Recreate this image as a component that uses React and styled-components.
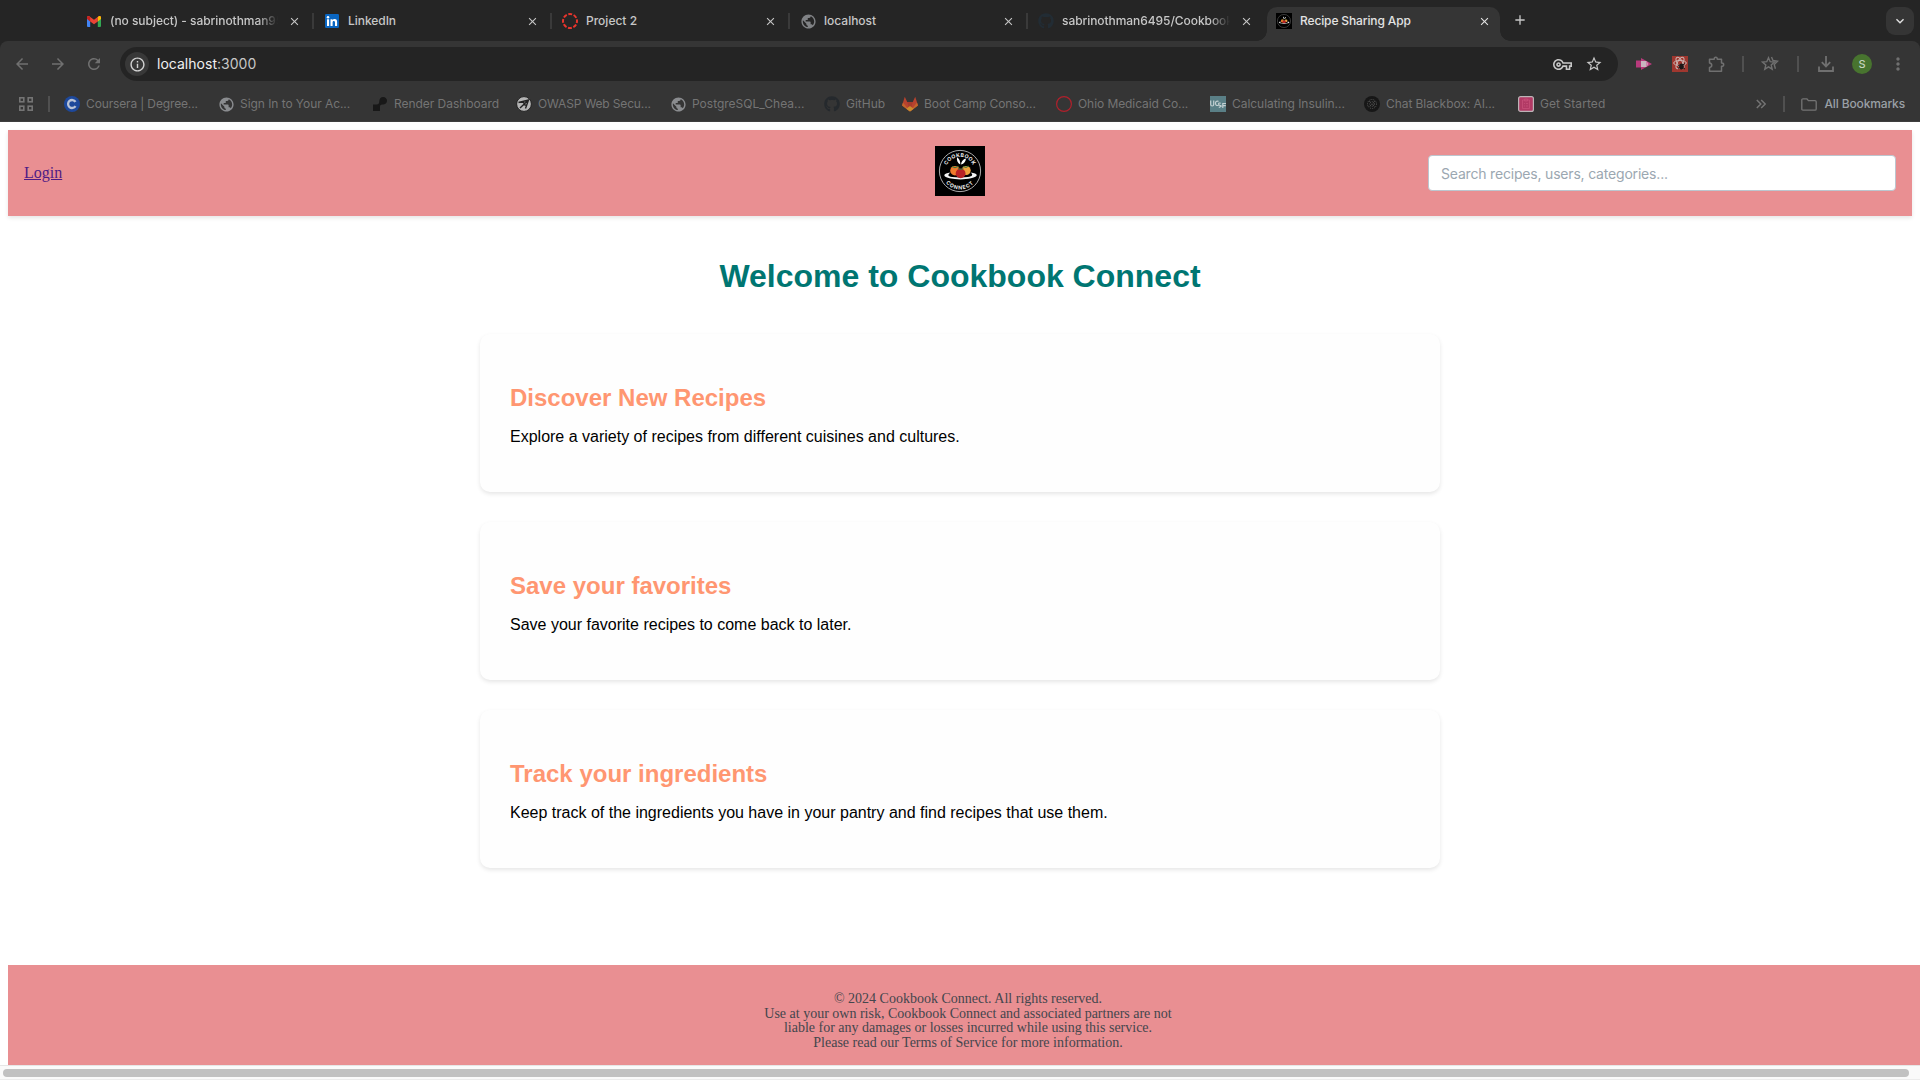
import React from "react";
import styled, { createGlobalStyle } from "styled-components";
import {
  MdArrowBack, MdArrowForward, MdRefresh, MdInfoOutline, MdStarOutline, MdClose, MdAdd,
  MdKeyboardArrowDown, MdMoreVert, MdPublic, MdOutlineVpnKey,
} from "react-icons/md";
import { FaGithub } from "react-icons/fa";

const GlobalStyle = createGlobalStyle`
  * { box-sizing: border-box; }
  body { margin: 0; background: #fff; overflow: hidden; }
  svg { display: block; flex: none; }
`;

const ui = `Inter, "Liberation Sans", sans-serif`;

const Window = styled.div`
  width: 1920px;
  height: 1080px;
  display: flex;
  flex-direction: column;
  overflow: hidden;
  background: #fff;
`;

/* ---------- tab strip ---------- */
const TabStrip = styled.div`
  height: 41px;
  flex: none;
  display: flex;
  align-items: flex-start;
  padding: 7px 6px 0 75px;
  background: #252525;
  font: 500 12px/28px ${ui};
  color: #c7c7c7;
`;
const Tab = styled.div`
  width: 238px;
  height: 28px;
  display: flex;
  align-items: center;
  padding: 0 0 0 11px;
`;
const ActiveTab = styled.div`
  width: 253px;
  height: 34px;
  margin-left: -8px;
  display: flex;
  align-items: flex-end;
`;
const ActiveBody = styled.div`
  width: 233px;
  height: 34px;
  display: flex;
  align-items: center;
  padding: 0 0 6px 9px;
  background: #353535;
  border-radius: 10px 10px 0 0;
  color: #e3e3e3;
`;
const Flare = styled.div`
  width: 10px;
  height: 10px;
  background: radial-gradient(circle at ${(p) => (p.$right ? "100% 0" : "0 0")}, #252525 9.5px, #353535 10px);
`;
const Favicon = styled.div`
  width: 16px;
  height: 16px;
  flex: none;
  display: flex;
  align-items: center;
  justify-content: center;
`;
const TabTitle = styled.div`
  width: 176px;
  flex: none;
  margin-left: 8px;
  white-space: nowrap;
  letter-spacing: ${(p) => p.$spacing || 0}px;
  ${(p) => p.$fade && "mask-image: linear-gradient(90deg, #000 148px, transparent 168px);"}
`;
const TabClose = styled.div`
  width: 16px;
  height: 16px;
  flex: none;
  display: flex;
  align-items: center;
  justify-content: center;
`;
const TabDivider = styled.div`
  width: 2px;
  height: 16px;
  flex: none;
  margin-left: auto;
  margin-right: -1px;
  background: #3a3a3a;
`;
const NewTab = styled.div`
  width: 20px;
  height: 28px;
  display: flex;
  align-items: center;
  justify-content: center;
  padding-bottom: 2px;
`;
const TabSearch = styled.div`
  width: 28px;
  height: 28px;
  margin-left: auto;
  border-radius: 9px;
  display: flex;
  align-items: center;
  justify-content: center;
  background: #353535;
  color: #e3e3e3;
`;

/* ---------- toolbar ---------- */
const ToolbarArea = styled.div`
  height: 81px;
  flex: none;
  background: linear-gradient(#353535, #353535) padding-box;
  border-radius: 8px 8px 0 0;
  border-bottom: 1px solid #3f3f3f;
`;
const ChromeBack = styled.div`
  flex: none;
  background: linear-gradient(#252525 20px, #353535 20px);
`;
const Toolbar = styled.div`
  display: flex;
  align-items: center;
  height: 40px;
  padding: 6px 4px 0;
`;
const Slot = styled.div`
  width: ${(p) => p.$w || 36}px;
  height: 34px;
  flex: none;
  display: flex;
  align-items: center;
  justify-content: center;
  color: ${(p) => p.$c || "#707070"};
`;
const Omnibox = styled.div`
  width: 1498px;
  height: 34px;
  margin: 0 8px;
  padding: 0 12px 0 5px;
  border-radius: 17px;
  background: #242424;
  display: flex;
  align-items: center;
  color: #d2d2d2;
`;
const SiteInfo = styled.div`
  width: 24px;
  height: 24px;
  border-radius: 50%;
  background: #383838;
  display: flex;
  align-items: center;
  justify-content: center;
`;
const Url = styled.div`
  margin-left: 8px;
  flex: 1;
  font: 400 14px/20px ${ui};
  letter-spacing: 0.02px;
  color: #c7c7c7;
  b { font-weight: 400; color: #f0f0f0; }
`;
const Bar = styled.div`
  width: 2px;
  height: 16px;
  flex: none;
  background: #505050;
`;
const Avatar = styled.div`
  width: 20px;
  height: 20px;
  border-radius: 50%;
  background: #48742f;
  color: #c5d2bd;
  text-align: center;
  font: 500 11px/20px ${ui};
`;

/* ---------- bookmarks ---------- */
const Bookmarks = styled.div`
  display: flex;
  align-items: center;
  height: 40px;
  padding: 6px 15px 0 18px;
  font: 400 12px/16px ${ui};
  color: #747474;
`;
const Bookmark = styled.div`
  width: ${(p) => p.$w}px;
  flex: none;
  display: flex;
  align-items: center;
  gap: 6px;
  white-space: nowrap;
  letter-spacing: ${(p) => p.$spacing || 0}px;
`;
const BookmarksEnd = styled.div`
  margin-left: auto;
  display: flex;
  align-items: center;
  color: #9aa0a6;
  font-weight: 500;
  letter-spacing: -0.14px;
  white-space: nowrap;
`;
const Gap = styled.div`
  width: ${(p) => p.$w}px;
  flex: none;
`;

/* ---------- page ---------- */
const Viewport = styled.div`
  flex: 1;
  overflow: hidden;
  display: flex;
  flex-direction: column;
  padding: 8px 0 0 8px;
`;
const Header = styled.header`
  width: 1904px;
  height: 86px;
  flex: none;
  display: grid;
  grid-template-columns: 1fr 50px 1fr;
  align-items: center;
  padding: 0 16px;
  background: #e98f92;
  box-shadow: 0 2px 4px rgba(0, 0, 0, 0.1);
`;
const LoginLink = styled.a`
  font: 16px/18px "Liberation Serif", "Times New Roman", serif;
  color: #4f1b85;
  text-decoration: underline;
`;
const LogoBox = styled.div`
  width: 50px;
  height: 50px;
  margin-bottom: 4px;
`;
const SearchBox = styled.input`
  justify-self: end;
  width: 468px;
  height: 36px;
  padding: 0 12px;
  border: 1px solid #bcc6cf;
  border-radius: 4px;
  background: #fff;
  font: 400 14px/20px ${ui};
  letter-spacing: -0.19px;
  &::placeholder { color: #9ba7b1; opacity: 1; }
`;
const Main = styled.main`
  width: 960px;
  margin-left: 472px;
  flex: none;
  font-family: "Liberation Sans", Helvetica, Arial, sans-serif;
`;
const Title = styled.h1`
  margin: 42px 0 39px;
  text-align: center;
  font-size: 32px;
  line-height: 37px;
  color: #007672;
`;
const Card = styled.section`
  height: 158px;
  margin-bottom: 30px;
  padding: 50px 30px 0;
  border-radius: 10px;
  background: #fefefe;
  box-shadow: 0 2px 4px rgba(0, 0, 0, 0.1);
`;
const CardTitle = styled.h2`
  margin: 0 0 16px;
  font-size: 24px;
  line-height: 28px;
  color: #ff9671;
`;
const CardText = styled.p`
  margin: 0;
  font-size: 16px;
  line-height: 18px;
  color: #000;
`;
const Footer = styled.footer`
  width: 1920px;
  height: 100px;
  flex: none;
  margin-top: auto;
  padding-top: 27px;
  background: #e98f92;
  color: #44464d;
  text-align: center;
  font: 14px/14.5px "Liberation Serif", "Times New Roman", serif;
`;
const ScrollTrack = styled.div`
  height: 15px;
  flex: none;
  padding: 3px 11px 2px 3px;
  border-top: 1px solid #e6e6e6;
  border-bottom: 1px solid #ececec;
  background: #fafafa;
`;
const ScrollThumb = styled.div`
  height: 8px;
  border-radius: 4px;
  background: #c1c1c1;
`;

/* ---------- drawings ---------- */
const Logo = ({ size = 50, plain }) => (
  <svg width={size} height={size} viewBox="0 0 50 50">
    <rect width="50" height="50" fill="#000" />
    <circle cx="25" cy="25" r="20.6" fill="none" stroke="#d8d8d8" strokeWidth="0.8" />
    {!plain && (
      <>
        <defs>
          <path id="arcTop" d="M10.8 25 A14.2 14.2 0 0 1 39.2 25" />
          <path id="arcBottom" d="M6.500 25 A18.500 18.500 0 0 0 43.500 25" />
        </defs>
        <g fill="#eee" fontFamily="Inter, sans-serif" fontWeight="700" fontSize="5.2" textAnchor="middle">
          <text letterSpacing="0.25"><textPath href="#arcTop" startOffset="50%">COOKBOOK</textPath></text>
          <text letterSpacing="0.85"><textPath href="#arcBottom" startOffset="50%">CONNECT</textPath></text>
        </g>
      </>
    )}
    <path d="M15.500 26.500C8 27.500 7 30.500 14.500 32.300c7 1.500 15 1.500 21.500 0 8-1.800 7.500-4.800-.5-5.800 3 2.200 2 3.900-2.500 4.500-5 .6-11 .6-16 0-4.500-.6-4.500-2.300-1.500-4.500z" fill="#f4f4f4" />
    <path d="M25.300 18.500C22.500 17 21.500 14.500 22 11.300c2.300 1.500 3.500 4 3.300 7.200zM26 18.500c.2-3 2-5.200 5-6-.2 3-1.800 5.300-5 6z" fill="#fff" />
    <circle cx="20" cy="24.700" r="4.800" fill="#ef7a2d" />
    <circle cx="31.200" cy="24.500" r="4.500" fill="#f0a03c" />
    <circle cx="25.600" cy="27.400" r="4.900" fill="#b82226" />
    <path d="M17 20.500l3 1.200 3.500-1.500M28 20.500l3 1 2.500-1.500M23 22.500l2.600 1 2.700-1" stroke="#3f7a3c" strokeWidth="1.100" fill="none" />
  </svg>
);

const Gmail = () => (
  <svg width="14" height="11" viewBox="0 0 14 11">
    <path d="M0 2v8a1 1 0 0 0 1 1h2.200V4.500z" fill="#4285f4" />
    <path d="M14 2v8a1 1 0 0 1-1 1h-2.200V4.500z" fill="#34a853" />
    <path d="M0 1.500C0 0 1.600-.4 2.600.4L7 3.700 11.400.4C12.400-.4 14 0 14 1.500L10.800 2.600v2.900L7 8.300 3.200 5.500z" fill="#ea4335" />
    <path d="M10.800 1.100l.8-.7C12.600-.4 14 .2 14 1.500V3l-3.200 2.500z" fill="#fbbc04" />
    <path d="M0 1.500V3l3.200 2.500V.9C2 -.3 0 0 0 1.500z" fill="#c5221f" />
  </svg>
);

const LinkedIn = () => (
  <svg width="14" height="14" viewBox="0 0 14 14">
    <rect width="14" height="14" rx="1.200" fill="#0a66c2" />
    <path d="M2 5.300h2.100V12H2zM5.500 5.300h2v.9c.4-.7 1.100-1.100 2.100-1.100 1.900 0 2.500 1.200 2.500 3V12H10V8.600c0-.9-.2-1.700-1.100-1.700-1 0-1.300.7-1.300 1.700V12H5.500z" fill="#fff" />
    <circle cx="3" cy="3.200" r="1.250" fill="#fff" />
  </svg>
);

const Canvas = () => (
  <svg width="16" height="16" viewBox="0 0 16 16">
    <circle cx="8" cy="8" r="7" fill="none" stroke="#e8352d" strokeWidth="2" strokeDasharray="3.900 1.600" strokeDashoffset="1.950" />
  </svg>
);

const AppsGrid = () => (
  <svg width="14" height="14" viewBox="0 0 14 14" fill="none" stroke="#747474" strokeWidth="1.600">
    <rect x=".8" y=".8" width="4" height="4" /><rect x="9.200" y=".8" width="4" height="4" />
    <rect x=".8" y="9.200" width="4" height="4" /><rect x="9.200" y="9.200" width="4" height="4" />
  </svg>
);

const Coursera = () => (
  <svg width="16" height="16" viewBox="0 0 16 16">
    <circle cx="8" cy="8" r="8" fill="#1d489b" />
    <path d="M11.500 5.900A4 4 0 1 0 11.500 10.100" fill="none" stroke="#b9c3d6" strokeWidth="2.300" />
  </svg>
);

const Render = () => (
  <svg width="16" height="16" viewBox="0 0 16 16" fill="#181818">
    <path d="M11 1a3.800 3.800 0 1 1-.6 7.500C8.300 8.500 8 9.500 8 11v4H1V8.500h3.500C7 8.500 7.200 7 7.300 5 7.500 2.600 9 1 11 1z" />
  </svg>
);

const Owasp = () => (
  <svg width="16" height="16" viewBox="0 0 16 16">
    <circle cx="8" cy="8" r="7.400" fill="#b5b5b5" stroke="#222" strokeWidth="1" />
    <path d="M2.500 6.500L12.500 4 9.500 12.500M12.500 4L4 12M7.500 5.500l.8 3.200 2.700.8" fill="none" stroke="#222" strokeWidth="1.400" />
  </svg>
);

const Gitlab = () => (
  <svg width="16" height="16" viewBox="0 0 16 16">
    <path d="M2.800.8L0 9.500 8 15.500 16 9.500 13.200.8 10.800 6H5.200z" fill="#b8432f" />
    <path d="M5.200 6h5.600L8 15.500z" fill="#a83b2c" />
    <path d="M0 9.500L1 6.500 8 15.500zM16 9.500l-1-3L8 15.500z" fill="#c2662b" />
    <path d="M4.300 12.700L8 10l3.700 2.700L8 15.500z" fill="#c98a2d" />
  </svg>
);

const OhioRing = () => (
  <svg width="16" height="16" viewBox="0 0 16 16">
    <circle cx="8" cy="8" r="7.400" fill="none" stroke="#b0202c" strokeWidth="1.200" />
  </svg>
);

const Ucsf = () => (
  <svg width="16" height="16" viewBox="0 0 16 16">
    <rect width="16" height="16" fill="#5a7f86" />
    <path d="M.7 4.500v4q0 1.500 1.500 1.500T3.700 8.500v-4M8.500 5.300Q5.400 4.500 5.500 7.300T8.500 9.300M10.800 7.200Q8.500 6.500 8.600 8t2 1.700-1.800 1.800M12.800 12V7.500H16M12.800 9.700h3" fill="none" stroke="#c3d0d2" strokeWidth="1.200" />
  </svg>
);

const Blackbox = () => (
  <svg width="16" height="16" viewBox="0 0 16 16">
    <circle cx="8" cy="8" r="8" fill="#171717" />
    <g fill="none" stroke="#575757" strokeWidth="1" strokeDasharray="1 1">
      <circle cx="8" cy="8" r="4.500" /><circle cx="8" cy="8" r="2.300" /><path d="M5 5l6 6M11 5l-6 6" />
    </g>
  </svg>
);

const GetStarted = () => (
  <svg width="16" height="16" viewBox="0 0 16 16">
    <rect x=".6" y=".6" width="14.800" height="14.800" rx="2" fill="#b23a65" stroke="#bdb3b7" strokeWidth="1.200" />
    <path d="M4.500 4h7v8.500h-7zM6.500 3h3v2h-3zM6 7.500h1M8 7.500h2M6 10h1M8 10h2" fill="none" stroke="#c64f79" strokeWidth=".8" />
  </svg>
);

const PinkArrow = () => (
  <svg width="16" height="14" viewBox="0 0 16 14">
    <path d="M5 1l11 6-11 6v-2.500H0v-7h5z" fill="#b83a7c" />
    <path d="M5 4h5.500v6H5z" fill="#c9b6c0" />
    <path d="M10.500 4l2 3-2 3z" fill="#d98bb3" />
  </svg>
);

const ReactTool = () => (
  <svg width="16" height="16" viewBox="0 0 16 16">
    <rect width="16" height="16" fill="#9f372f" />
    <g fill="none" stroke="#ccb5b2" strokeWidth="1">
      <ellipse cx="8" cy="7" rx="6.300" ry="2.600" />
      <ellipse cx="8" cy="7" rx="6.300" ry="2.600" transform="rotate(60 8 7)" />
      <ellipse cx="8" cy="7" rx="6.300" ry="2.600" transform="rotate(120 8 7)" />
    </g>
    <ellipse cx="9.500" cy="10.500" rx="2.300" ry="3" fill="#1d1717" />
    <path d="M6 9l7 4M6 12.500l7-5" stroke="#1d1717" strokeWidth="1" />
  </svg>
);

const Puzzle = () => (
  <svg width="17" height="17" viewBox="0 0 17 17" fill="none" stroke="#707070" strokeWidth="1.500">
    <path d="M1.500 3.200H6.200C6.200.6 9.300.6 9.300 3.200H13.500V7C16.400 7 16.400 10.300 13.500 10.300V15.200H1.500V11.500C4.500 11 4.500 7.500 1.500 7z" strokeLinejoin="round" />
  </svg>
);

const DoubleStar = () => (
  <svg width="18" height="16" viewBox="0 0 18 16" fill="none" stroke="#707070" strokeWidth="1.400">
    <path d="M7.500 1.700l1.700 4 4.300.4-3.300 2.800 1 4.300-3.700-2.300-3.700 2.300 1-4.300L1.500 6.100l4.300-.4z" />
    <path d="M10.500 1l1.500 3.500 4.500.7-3.300 3.200 1.200 4.300" />
  </svg>
);

const Download = () => (
  <svg width="16" height="16" viewBox="0 0 16 16" fill="none" stroke="#707070" strokeWidth="1.800">
    <path d="M8 0v10M3.800 6.200L8 10.400l4.200-4.200M1 10.500V15h14v-4.500" />
  </svg>
);

const Chevrons = () => (
  <svg width="10" height="10" viewBox="0 0 10 10" fill="none" stroke="#747474" strokeWidth="1.500">
    <path d="M.8 1l4 4-4 4M5.200 1l4 4-4 4" />
  </svg>
);

const Folder = () => (
  <svg width="16" height="13" viewBox="0 0 16 13" fill="none" stroke="#747474" strokeWidth="1.300" strokeLinejoin="round">
    <path d="M.8 2Q.8 .8 2 .8H5.800L7.400 2.600H14Q15.200 2.600 15.200 3.800V11Q15.200 12.200 14 12.200H2Q.8 12.200 .8 11z" />
  </svg>
);

const tabs = [
  { icon: <Gmail />, title: "(no subject) - sabrinothman95", fade: true, spacing: -0.05 },
  { icon: <LinkedIn />, title: "LinkedIn", spacing: -0.05 },
  { icon: <Canvas />, title: "Project 2" },
  { icon: <MdPublic size={17} color="#808285" />, title: "localhost" },
  { icon: <FaGithub size={16} color="#222c34" />, title: "sabrinothman6495/Cookbook", fade: true, spacing: -0.06 },
];

const bookmarks = [
  { icon: <Coursera />, label: "Coursera | Degree...", w: 154, spacing: -0.14 },
  { icon: <MdPublic size={17} color="#8a8c8f" />, label: "Sign In to Your Ac...", w: 154, spacing: -0.06 },
  { icon: <Render />, label: "Render Dashboard", w: 144, spacing: -0.04 },
  { icon: <Owasp />, label: "OWASP Web Secu...", w: 154, spacing: -0.15 },
  { icon: <MdPublic size={17} color="#8a8c8f" />, label: "PostgreSQL_Chea...", w: 154 },
  { icon: <FaGithub size={16} color="#25292d" />, label: "GitHub", w: 78 },
  { icon: <Gitlab />, label: "Boot Camp Conso...", w: 154, spacing: -0.08 },
  { icon: <OhioRing />, label: "Ohio Medicaid Co...", w: 154, spacing: -0.07 },
  { icon: <Ucsf />, label: "Calculating Insulin...", w: 154, spacing: -0.04 },
  { icon: <Blackbox />, label: "Chat Blackbox: AI...", w: 154, spacing: -0.07 },
  { icon: <GetStarted />, label: "Get Started", w: 90, spacing: 0.07 },
];

const cards = [
  ["Discover New Recipes", "Explore a variety of recipes from different cuisines and cultures."],
  ["Save your favorites", "Save your favorite recipes to come back to later."],
  ["Track your ingredients", "Keep track of the ingredients you have in your pantry and find recipes that use them."],
];

export default function App() {
  return (
    <Window>
      <GlobalStyle />
      <TabStrip>
        {tabs.map((t, i) => (
          <Tab key={t.title}>
            <Favicon>{t.icon}</Favicon>
            <TabTitle $fade={t.fade} $spacing={t.spacing}>{t.title}</TabTitle>
            <TabClose><MdClose size={13} /></TabClose>
            {i < 4 && <TabDivider />}
          </Tab>
        ))}
        <ActiveTab>
          <Flare />
          <ActiveBody>
            <Favicon><Logo size={16} plain /></Favicon>
            <TabTitle $spacing={-0.13}>Recipe Sharing App</TabTitle>
            <TabClose><MdClose size={13} /></TabClose>
          </ActiveBody>
          <Flare $right />
        </ActiveTab>
        <NewTab><MdAdd size={16} /></NewTab>
        <TabSearch><MdKeyboardArrowDown size={16} /></TabSearch>
      </TabStrip>

      <ChromeBack>
        <ToolbarArea>
          <Toolbar>
            <Slot><MdArrowBack size={18} /></Slot>
            <Slot><MdArrowForward size={18} /></Slot>
            <Slot><MdRefresh size={18} /></Slot>
            <Omnibox>
              <SiteInfo><MdInfoOutline size={17} /></SiteInfo>
              <Url><b>localhost</b>:3000</Url>
              <Slot $w={40} $c="#c7c7c7"><MdOutlineVpnKey size={19} /></Slot>
              <Slot $w={24} $c="#c7c7c7"><MdStarOutline size={18} /></Slot>
            </Omnibox>
            <Slot><PinkArrow /></Slot>
            <Slot><ReactTool /></Slot>
            <Slot><Puzzle /></Slot>
            <Slot $w={18}><Bar /></Slot>
            <Slot><DoubleStar /></Slot>
            <Slot $w={20}><Bar /></Slot>
            <Slot><Download /></Slot>
            <Slot><Avatar>S</Avatar></Slot>
            <Slot><MdMoreVert size={20} /></Slot>
          </Toolbar>
          <Bookmarks>
            <Favicon><AppsGrid /></Favicon>
            <Gap $w={14} />
            <Bar />
            <Gap $w={14} />
            {bookmarks.map((b) => (
              <Bookmark key={b.label} $w={b.w} $spacing={b.spacing}>
                <Favicon>{b.icon}</Favicon>
                {b.label}
              </Bookmark>
            ))}
            <BookmarksEnd>
              <Chevrons />
              <Gap $w={17} />
              <Bar />
              <Gap $w={16} />
              <Folder />
              <Gap $w={8} />
              All Bookmarks
            </BookmarksEnd>
          </Bookmarks>
        </ToolbarArea>
      </ChromeBack>

      <Viewport>
        <Header>
          <div><LoginLink href="#">Login</LoginLink></div>
          <LogoBox><Logo /></LogoBox>
          <SearchBox placeholder="Search recipes, users, categories..." />
        </Header>
        <Main>
          <Title>Welcome to Cookbook Connect</Title>
          {cards.map(([title, text]) => (
            <Card key={title}>
              <CardTitle>{title}</CardTitle>
              <CardText>{text}</CardText>
            </Card>
          ))}
        </Main>
        <Footer>
          <div>© 2024 Cookbook Connect. All rights reserved.</div>
          <div>Use at your own risk, Cookbook Connect and associated partners are not</div>
          <div>liable for any damages or losses incurred while using this service.</div>
          <div>Please read our Terms of Service for more information.</div>
        </Footer>
      </Viewport>
      <ScrollTrack><ScrollThumb /></ScrollTrack>
    </Window>
  );
}
